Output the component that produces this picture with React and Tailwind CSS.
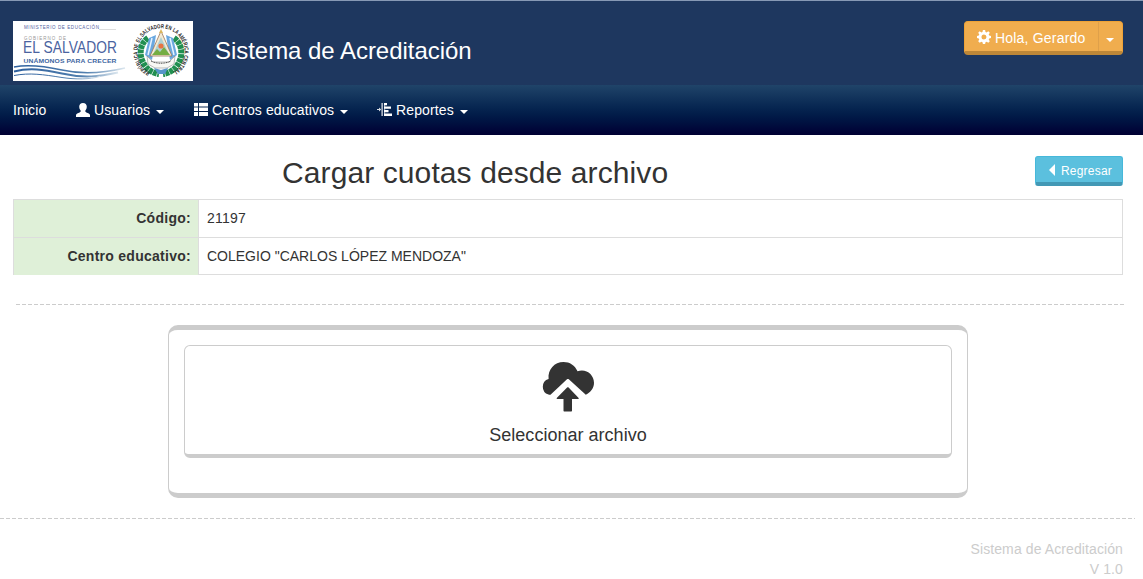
import React from 'react';

function Caret() {
  return <span className="ml-1.5 mt-[3px] h-0 w-0 border-x-4 border-t-4 border-x-transparent border-t-white" />;
}

function UserIcon() {
  return (
    <svg viewBox="0 0 14 14" className="mr-1 -mt-px h-3.5 w-3.5 shrink-0" fill="#fff">
      <path d="M7 0C4.600 0 3.200 1.400 3.200 3.700c0 1.200.4 2.200.9 3 .3.500.7.900.7 1.400 0 .7-.4 1.100-1.200 1.400L1.200 10.500C.4 10.900 0 11.500 0 12.300V14h14v-1.700c0-.8-.4-1.400-1.200-1.800L10.400 9.500C9.600 9.200 9.200 8.800 9.200 8.100c0-.5.4-.9.7-1.400.5-.8.9-1.800.9-3C10.800 1.400 9.400 0 7 0Z" />
    </svg>
  );
}

function ListIcon() {
  return (
    <svg viewBox="0 0 14 14" className="mr-1 h-3.5 w-3.5 shrink-0" fill="#fff">
      <path d="M0 0h4v3.500H0zM5 0h9v3.500H5zM0 4.500h4v3.500H0zM5 4.500h9v3.500H5zM0 9h4v4H0zM5 9h9v4H5z" />
    </svg>
  );
}

function ReportIcon() {
  return (
    <svg viewBox="0 0 15 14" className="-ml-px mr-1 h-3.5 w-[15px] shrink-0" fill="#fff">
      <path d="M0 6h2V4.500L4.200 6.500 2 8.500V7H0z" opacity=".85" />
      <path d="M4.300 0h1.700v13H4.300z" opacity=".65" />
      <path d="M7 0h3v2.200H7zM7 3.500h7v2.300H7zM7 7h4.500v2.300H7zM7 10.500h8V13H7z" />
      <path d="M7 0h1.200v13H7z" opacity=".6" />
    </svg>
  );
}

function GearIcon() {
  return (
    <svg viewBox="0 0 14 14" className="mr-1 -mt-0.5 h-3.5 w-3.5" fill="#fff">
      <path fillRule="evenodd" d="M5.900 0h2.200l.4 1.900 1.100.5 1.700-1.100 1.500 1.500-1.100 1.600.5 1.100 1.800.4v2.200l-1.800.4-.5 1.100 1.100 1.700-1.500 1.500-1.700-1.100-1.100.5L8.100 14H5.900l-.4-1.800-1.100-.5-1.700 1.100-1.500-1.500 1.100-1.700-.5-1.100L0 8.100V5.900l1.800-.4.5-1.100-1.100-1.600 1.500-1.500 1.700 1.100 1.100-.5zM7 4.500a2.500 2.500 0 1 0 0 5 2.500 2.500 0 0 0 0-5z" />
    </svg>
  );
}

function UploadIcon() {
  return (
    <svg viewBox="0 0 52 50" className="h-[50px] w-[52px]" fill="#333">
      <path d="M6.500 32.500A8.100 8.100 0 0 1 6.600 17C5.600 7.500 12.500 0 21.500 0c6.300 0 11.500 3.300 14 9.300C44 6.300 52 12.500 52 20.800c0 5.300-3.200 9.700-8.200 11.900L26.800 17.300c-.6-.5-1.200-.5-1.800 0L8.500 32.700c-.7.200-1.300.1-2-.2Z" />
      <path d="M25.100 25.600c.5-.5 1-.5 1.500 0l9.800 10.100c.6.700.4 1.300-.5 1.300H30v11.500c0 .7-.3 1-1 1h-6.500c-.7 0-1-.3-1-1V37h-6c-.9 0-1.100-.6-.5-1.300z" />
    </svg>
  );
}

function Logo() {
  return (
    <svg viewBox="0 0 180 60" className="h-[60px] w-[180px] bg-white" fontFamily="Liberation Sans, Arial, sans-serif">
      <defs>
        <path id="seal" d="M137 51.500A23.500 23.500 0 1 1 159 51.500" />
        <linearGradient id="wave">
          <stop stopColor="#2d5f9d" />
          <stop offset=".65" stopColor="#517fae" />
          <stop offset="1" stopColor="#dce7ef" />
        </linearGradient>
      </defs>
      <text x="11" y="8" fontSize="4.500" textLength="75" fill="#5461a0">MINISTERIO DE EDUCACIÓN</text>
      <path d="M86 8.500h17" stroke="#bbb" strokeWidth=".5" />
      <text x="11" y="18.500" fontSize="4.500" textLength="42" fill="#999">GOBIERNO DE</text>
      <text x="10" y="32" fontSize="16" textLength="94" lengthAdjust="spacingAndGlyphs" fill="#4a63a0">EL SALVADOR</text>
      <text x="10.500" y="41.500" fontSize="6" fontWeight="bold" textLength="93" lengthAdjust="spacingAndGlyphs" fill="#3c65a0">UNÁMONOS PARA CRECER</text>
      <g fill="none" stroke="url(#wave)">
        <path strokeWidth="1.500" d="M1 46c15-3 30-1 48 3 22 5 42 3 63-2" />
        <path strokeWidth="2" d="M1 50.500c16-4 29-2 48 2 22 5 37 3 56-1" />
        <path strokeWidth="1" d="M1 54.500c16-3 29-1 48 2 13 2 28 2 38-1" />
      </g>
      <path d="M135 17c-7 5-9 14-6 22 3 8 9 13 17 14M161 17c7 5 9 14 6 22-3 8-9 13-17 14" fill="none" stroke="#218f50" strokeWidth="6" strokeDasharray="4 .6" />
      <path d="M136 17l7-3-4 25-7-5zM160 17l-7-3 4 25 7-5z" fill="#6aa8e0" />
      <path d="M139 17l-4 17M157 17l4 17" stroke="#e7f3ff" strokeWidth="1.500" />
      <path d="m148 10-11 25h22z" fill="#f4ead3" stroke="#9b7658" strokeWidth=".8" />
      <path d="m148 16-7 15h14z" fill="#afd0d2" />
      <path d="m139 34 5-6 3 3 4-5 6 8z" fill="#75ad43" />
      <circle cx="148" cy="25" r="2.600" fill="#e77443" />
      <path d="m148 8 2 4h-4z" fill="#dab55b" />
      <path d="M134 35l6 6h16l6-6-1 8-7 4h-12l-7-4z" fill="#f8f8f4" stroke="#777" strokeWidth=".5" />
      <path d="M138 40c6 3 14 3 20 0" fill="none" stroke="#444" strokeDasharray="1 .7" />
      <path d="m141 47 7 2 7-2-3 6h-7z" fill="#5795c9" />
      <text fontSize="6" fontWeight="bold" fill="#252525">
        <textPath href="#seal" textLength="123" lengthAdjust="spacingAndGlyphs">REPÚBLICA DE EL SALVADOR EN LA AMÉRICA CENTRAL</textPath>
      </text>
    </svg>
  );
}

export default function App() {
  return (
    <div className="h-[579px] w-[1143px] overflow-hidden bg-white font-['Liberation_Sans',Arial,sans-serif] text-sm leading-5 tracking-[0.1px] text-[#333]">
      <header className="flex h-[85px] items-start border-t border-[#8799b5] bg-[#1e375f] pl-[13px] pr-5 pt-5">
        <Logo />
        <h1 className="ml-[22px] mt-[14px] text-2xl leading-8 tracking-[-0.04px] text-white">Sistema de Acreditación</h1>
        <div className="ml-auto flex h-[34px] w-[159px] overflow-hidden rounded border border-b-4 border-[#eea236] border-b-[#bd8738] bg-[#f0ad4e] text-white">
          <button className="flex w-[133px] items-center pl-3 pt-0.5 tracking-[0.2px]"><GearIcon />Hola, Gerardo</button>
          <button className="flex flex-1 items-center border-l border-[#dfa04a] pl-[7px]"><span className="mt-1.5 border-x-4 border-t-4 border-x-transparent border-t-white" /></button>
        </div>
      </header>
      <nav className="flex h-[50px] items-center gap-[30px] bg-linear-to-b from-[#204469] to-[#000033] px-[13px] text-white">
        <a className="w-[33px] whitespace-nowrap">Inicio</a>
        <a className="flex w-[88px] items-center whitespace-nowrap"><UserIcon /><span className="w-14 tracking-[0.12px]">Usuarios</span><Caret /></a>
        <a className="flex w-[154px] items-center whitespace-nowrap"><ListIcon /><span className="w-[122px] tracking-[0.13px]">Centros educativos</span><Caret /></a>
        <a className="flex items-center whitespace-nowrap"><ReportIcon /><span className="w-[58px] tracking-[0.12px]">Reportes</span><Caret /></a>
      </nav>
      <main>
        <div className="flex h-16 pr-5">
          <h2 className="w-[1035px] pl-[282px] pt-5 text-[30px] leading-9 tracking-[0.1px]">Cargar cuotas desde archivo</h2>
          <button className="mt-[21px] flex h-[30px] w-[88px] items-center rounded-[3px] border border-b-4 border-[#46b8da] border-b-[#4298b5] bg-[#5bc0de] pl-[13px] pt-0.5 text-xs tracking-[0.2px] text-white">
            <span className="-mt-0.5 mr-1.5 border-y-[6px] border-r-[6px] border-y-transparent border-r-white" />Regresar
          </button>
        </div>
        <dl className="ml-[13px] grid h-[76px] w-[1110px] grid-cols-[185px_1fr] grid-rows-[38px_37px] border border-[#ddd]">
          <dt className="border-b border-r border-[#ddd] bg-[#dff0d8] pr-[7px] pt-2 text-right font-bold tracking-[0.27px]">Código:</dt>
          <dd className="border-b border-[#ddd] pl-2 pt-2 tracking-[0.25px]">21197</dd>
          <dt className="border-r border-[#ddd] bg-[#dff0d8] pr-[7px] pt-2 text-right font-bold tracking-[0.27px]">Centro educativo:</dt>
          <dd className="pl-2 pt-2 tracking-normal">COLEGIO "CARLOS LÓPEZ MENDOZA"</dd>
        </dl>
        <div className="ml-4 mt-[29px] h-px w-[1108px] bg-[repeating-linear-gradient(to_right,#ccc_0_4px,transparent_4px_6px)]" />
        <section className="ml-[168px] mt-5 h-[173px] w-[800px] rounded-[10px] border-x border-y-[5px] border-[#ccc] p-[15px]">
          <button className="flex h-[113px] w-full flex-col items-center rounded-md border border-b-4 border-[#ccc] pt-4 text-lg leading-6 tracking-[0.02px]">
            <UploadIcon /><span className="mt-[11px]">Seleccionar archivo</span>
          </button>
        </section>
      </main>
      <div className="mt-5 h-px w-[1135px] bg-[repeating-linear-gradient(to_right,#ccc_0_4px,transparent_4px_6px)]" />
      <footer className="pr-5 pt-5 text-right text-[#ccc]"><p>Sistema de Acreditación</p><p>V 1.0</p></footer>
    </div>
  );
}
